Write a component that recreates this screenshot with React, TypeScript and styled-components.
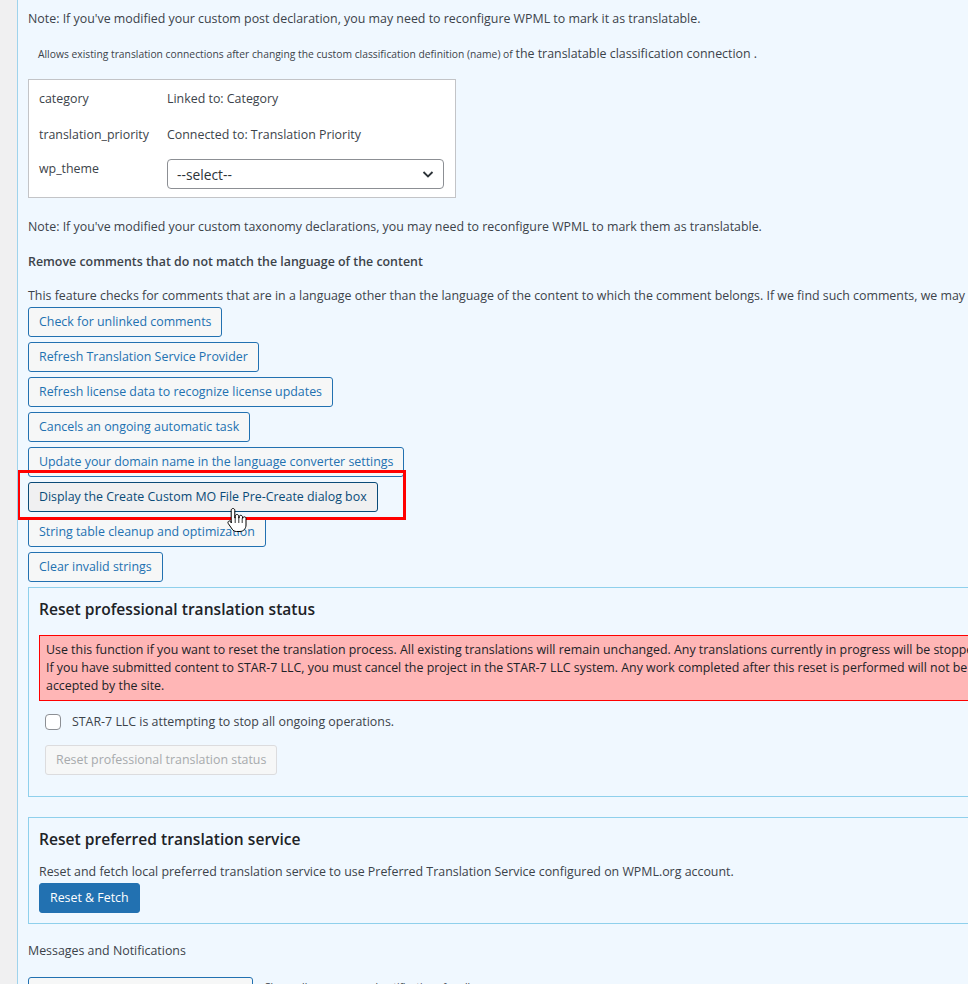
import React from 'react';
import styled, { createGlobalStyle } from 'styled-components';

const FONT = `'Open Sans', 'Noto Sans', sans-serif`;
const BASE = '12.4px';

const GlobalStyle = createGlobalStyle`
  html, body {
    margin: 0;
    padding: 0;
    background: #f0f0f1;
  }

  body {
    font-family: ${FONT};
    font-size: ${BASE};
    color: #3c434a;
  }

  * {
    box-sizing: border-box;
  }
`;

const Page = styled.div`
  display: flex;
  min-height: 100vh;
  overflow: hidden;
`;

const Gutter = styled.div`
  width: 18px;
  flex-shrink: 0;
  background: #f0f0f1;
  border-right: 1px solid #9fd3ec;
`;

const Content = styled.main`
  flex: 1;
  min-width: 0;
  overflow: hidden;
  background: #f0f8ff;
  padding: 10px 0 0 10px;
`;

const Text = styled.p<{ $top?: number; $bold?: boolean; $nowrap?: boolean }>`
  margin: ${(p) => p.$top ?? 0}px 0 0;
  line-height: 18px;
  font-weight: ${(p) => (p.$bold ? 600 : 400)};
  white-space: ${(p) => (p.$nowrap ? 'nowrap' : 'normal')};
`;

const SmallNote = styled.p`
  margin: 17px 0 0;
  padding-left: 10px;
  line-height: 18px;
  font-size: 10.3px;
  white-space: nowrap;

  span {
    font-size: ${BASE};
  }
`;

const TaxTable = styled.div`
  margin-top: 16px;
  width: 428px;
  background: #fff;
  border: 1px solid #c3c4c7;
  display: grid;
  grid-template-columns: 128px 1fr;
  padding: 0 11px 8px 10px;
`;

const Cell = styled.div<{ $last?: boolean }>`
  line-height: 18px;
  height: ${(p) => (p.$last ? 'auto' : '36px')};
  padding-top: ${(p) => (p.$last ? '8px' : '10px')};
`;

const Select = styled.div`
  height: 30px;
  margin-top: 7px;
  border: 1px solid #8c8f94;
  border-radius: 4px;
  background: #fff;
  display: flex;
  align-items: center;
  justify-content: space-between;
  padding: 0 8px 0 9px;
  font-size: 13.8px;
  color: #2c3338;
`;

const ButtonStack = styled.div`
  margin-top: 2px;
  display: flex;
  flex-direction: column;
  align-items: flex-start;
  gap: 5px;
`;

const Button = styled.button<{ $hover?: boolean }>`
  height: 30px;
  padding: 0 10px;
  border: 1px solid ${(p) => (p.$hover ? '#0a4b78' : '#2271b1')};
  border-radius: 3px;
  background: ${(p) => (p.$hover ? '#f0f0f1' : '#f6f7f7')};
  color: ${(p) => (p.$hover ? '#0a4b78' : '#2271b1')};
  font-family: ${FONT};
  font-size: ${BASE};
  line-height: 28px;
  white-space: nowrap;
  cursor: pointer;
`;

const DisabledButton = styled(Button)`
  border-color: #dcdcde;
  color: #a7aaad;
  background: #f6f7f7;
  cursor: default;
`;

const PrimaryButton = styled(Button)`
  margin-top: 2px;
  background: #2271b1;
  border-color: #2271b1;
  color: #fff;
`;

const WideButton = styled(Button)`
  width: 225px;
  height: 40px;
  padding-top: 10px;
`;

const Highlight = styled.div`
  position: relative;

  &::after {
    content: '';
    position: absolute;
    left: -11px;
    top: -12px;
    right: -28px;
    bottom: -8px;
    border: 3px solid #f00;
    pointer-events: none;
  }
`;

const Pointer = styled.svg`
  position: absolute;
  left: 199px;
  top: 25px;
  z-index: 2;
`;

const Panel = styled.section<{ $top: number; $bottom: number }>`
  margin-top: ${(p) => p.$top}px;
  width: 1100px;
  border: 1px solid #8fd0ec;
  padding: 10px 10px ${(p) => p.$bottom}px;
`;

const PanelTitle = styled.h2`
  margin: 0;
  font-size: 15.6px;
  font-weight: 600;
  line-height: 23px;
  color: #1d2327;
`;

const Notice = styled.div`
  margin-top: 14px;
  background: #ffb6b6;
  border: 1px solid #f00;
  padding: 5px 6px;
  line-height: 18px;
  color: #1d2327;
  white-space: nowrap;
`;

const CheckRow = styled.label`
  margin-top: 12px;
  margin-left: 6px;
  display: flex;
  align-items: center;
  gap: 11px;
  line-height: 18px;
`;

const CheckBox = styled.span`
  width: 16px;
  height: 16px;
  border: 1px solid #8c8f94;
  border-radius: 4px;
  background: #fff;
`;

const Indented = styled.div`
  margin: 14px 0 0 6px;
`;

const SubHeading = styled.h3`
  margin: 18px 0 0;
  font-size: ${BASE};
  font-weight: 500;
  line-height: 18px;
  color: #3c434a;
`;

const Row = styled.div`
  margin-top: 17px;
  display: flex;
  align-items: flex-start;
  gap: 11px;
`;

const Hint = styled.span`
  font-size: 10.3px;
  line-height: 14px;
  padding-top: 3px;
`;

const tools = [
  'Check for unlinked comments',
  'Refresh Translation Service Provider',
  'Refresh license data to recognize license updates',
  'Cancels an ongoing automatic task',
  'Update your domain name in the language converter settings',
];

export default function App() {
  return (
    <Page>
      <GlobalStyle />
      <Gutter />
      <Content>
        <Text>
          Note: If you've modified your custom post declaration, you may need to reconfigure WPML to mark it as
          translatable.
        </Text>

        <SmallNote>
          Allows existing translation connections after changing the custom classification definition (name) of{' '}
          <span>the translatable classification connection .</span>
        </SmallNote>

        <TaxTable>
          <Cell>category</Cell>
          <Cell>Linked to: Category</Cell>
          <Cell>translation_priority</Cell>
          <Cell>Connected to: Translation Priority</Cell>
          <Cell $last>wp_theme</Cell>
          <Select>
            --select--
            <svg width="14" height="14" viewBox="0 0 14 14">
              <path d="M2.5 5l4.5 4.5L11.5 5" fill="none" stroke="#2c3338" strokeWidth="1.8" />
            </svg>
          </Select>
        </TaxTable>

        <Text $top={20}>
          Note: If you've modified your custom taxonomy declarations, you may need to reconfigure WPML to mark them as
          translatable.
        </Text>

        <Text $top={17} $bold>
          Remove comments that do not match the language of the content
        </Text>

        <Text $top={16} $nowrap>
          This feature checks for comments that are in a language other than the language of the content to which the
          comment belongs. If we find such comments, we may remove them.
        </Text>

        <ButtonStack>
          {tools.map((t) => (
            <Button key={t}>{t}</Button>
          ))}
          <Highlight>
            <Button $hover>Display the Create Custom MO File Pre-Create dialog box</Button>
            <Pointer width="20" height="26" viewBox="0 0 20 26">
              <path
                d="M6 1.5c1 0 1.8.8 1.8 1.8V11h.4V9.3c0-1 .8-1.8 1.8-1.8s1.8.8 1.8 1.8V11h.3V10c0-1 .8-1.7 1.7-1.7s1.7.8 1.7 1.7v1.3h.3c0-.9.8-1.5 1.6-1.5.9 0 1.6.7 1.6 1.6V18c0 3.5-2.5 6.5-6 6.5H9.5c-2 0-3.300-.9-4.300-2.300L1.300 16.600c-.6-.8-.4-1.900.4-2.400.8-.5 1.800-.3 2.400.4L4.200 16V3.300c0-1 .8-1.800 1.800-1.800z"
                fill="#fff"
                stroke="#000"
                strokeWidth="1"
              />
              <path d="M8.2 11v5M11.8 11v5M15.2 11.3v4.7" stroke="#000" strokeWidth="0.8" />
            </Pointer>
          </Highlight>
          <Button>String table cleanup and optimization</Button>
          <Button>Clear invalid strings</Button>
        </ButtonStack>

        <Panel $top={5} $bottom={21}>
          <PanelTitle>Reset professional translation status</PanelTitle>
          <Notice>
            Use this function if you want to reset the translation process. All existing translations will remain
            unchanged. Any translations currently in progress will be stopped.
            <br />
            If you have submitted content to STAR-7 LLC, you must cancel the project in the STAR-7 LLC system. Any work
            completed after this reset is performed will not be
            <br />
            accepted by the site.
          </Notice>
          <CheckRow>
            <CheckBox />
            STAR-7 LLC is attempting to stop all ongoing operations.
          </CheckRow>
          <Indented>
            <DisabledButton disabled>Reset professional translation status</DisabledButton>
          </Indented>
        </Panel>

        <Panel $top={20} $bottom={10}>
          <PanelTitle>Reset preferred translation service</PanelTitle>
          <Text $top={12}>
            Reset and fetch local preferred translation service to use Preferred Translation Service configured on
            WPML.org account.
          </Text>
          <PrimaryButton>Reset &amp; Fetch</PrimaryButton>
        </Panel>

        <SubHeading>Messages and Notifications</SubHeading>

        <Row>
          <WideButton>Clear all messages</WideButton>
          <Hint>Clears all messages and notifications for all users</Hint>
        </Row>
      </Content>
    </Page>
  );
}
